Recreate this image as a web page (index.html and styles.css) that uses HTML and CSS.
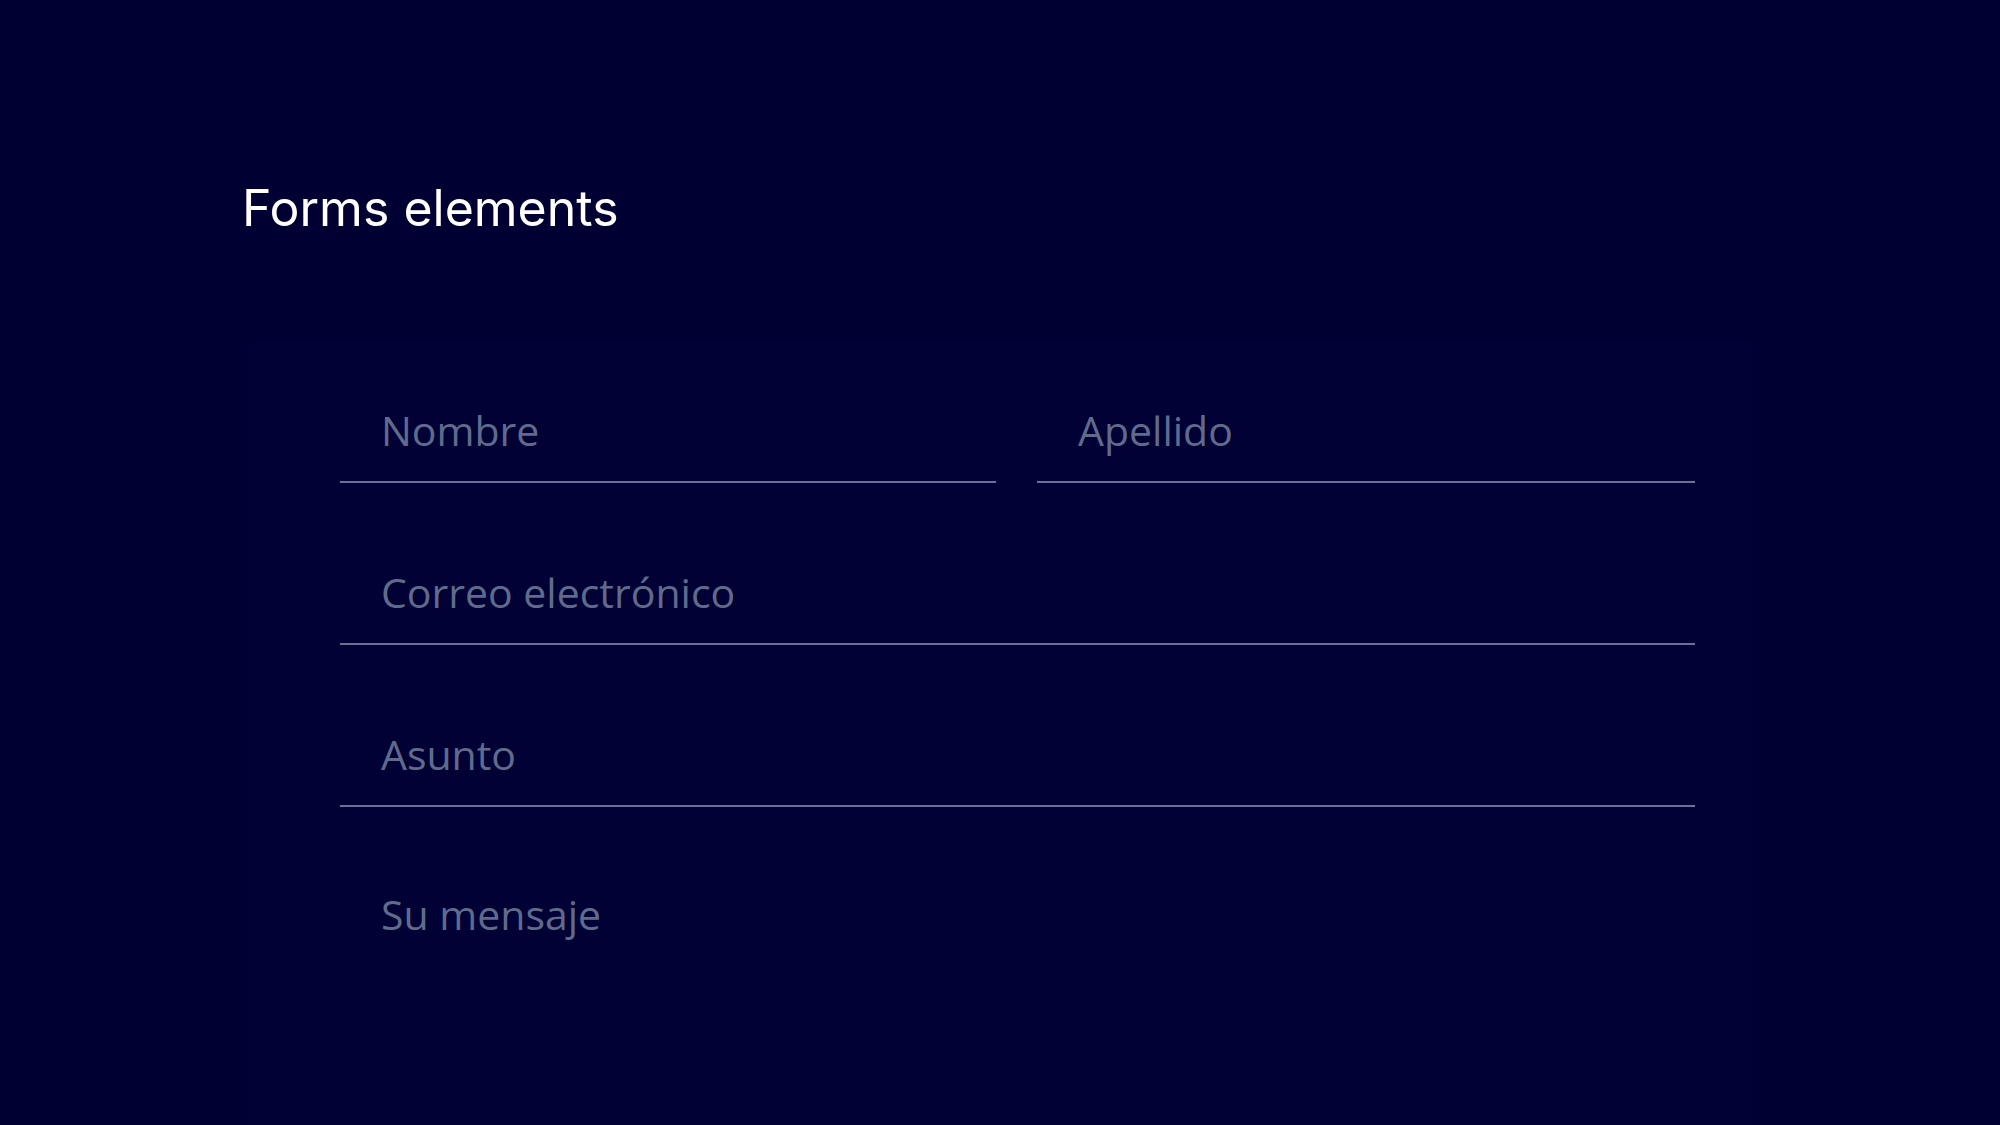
FILE: index.html
```html
<!DOCTYPE html>
<html lang="es">
<head>
<meta charset="utf-8">
<title>Forms elements</title>
<link rel="stylesheet" href="styles.css">
</head>
<body>
<main class="page">
  <h1 class="title">Forms elements</h1>
  <section class="card">
    <form class="form-grid">
      <input class="field" type="text" placeholder="Nombre">
      <input class="field" type="text" placeholder="Apellido">
      <input class="field field-wide" type="email" placeholder="Correo electrónico">
      <input class="field field-wide" type="text" placeholder="Asunto">
      <textarea class="message field-wide" placeholder="Su mensaje"></textarea>
    </form>
  </section>
</main>
</body>
</html>
```

FILE: styles.css
```css
html, body {
  margin: 0;
  padding: 0;
  background: #000033;
  width: 2000px;
  height: 1125px;
  overflow: hidden;
}

.page {
  padding: 178px 0 0 242px;
  box-sizing: border-box;
}

.title {
  margin: 0;
  font-family: Inter, "Liberation Sans", sans-serif;
  font-weight: 400;
  font-size: 50px;
  line-height: 60px;
  color: #ffffff;
  letter-spacing: 0;
}

.card {
  margin: 102px 0 0 8px;
  width: 1502px;
  padding: 38px 57px 0 90px;
  box-sizing: border-box;
  background: #010135;
  height: 785px;
}

.form-grid {
  display: grid;
  grid-template-columns: 656px 658px;
  column-gap: 41px;
  row-gap: 57px;
  width: 1355px;
}

.field-wide {
  grid-column: 1 / -1;
}

.field,
.message {
  display: block;
  width: 100%;
  box-sizing: border-box;
  margin: 0;
  background: transparent;
  border: none;
  outline: none;
  font-family: "Open Sans", "Noto Sans", sans-serif;
  font-size: 41px;
  color: #b0b4cc;
}

.field {
  height: 105px;
  padding: 0 40px 0 41px;
  border-bottom: 2px solid #6e6e96;
}

.message {
  height: 220px;
  padding: 22px 40px 0 41px;
  line-height: normal;
  resize: none;
}

.field::placeholder,
.message::placeholder {
  color: #606b8c;
  opacity: 1;
}
```
